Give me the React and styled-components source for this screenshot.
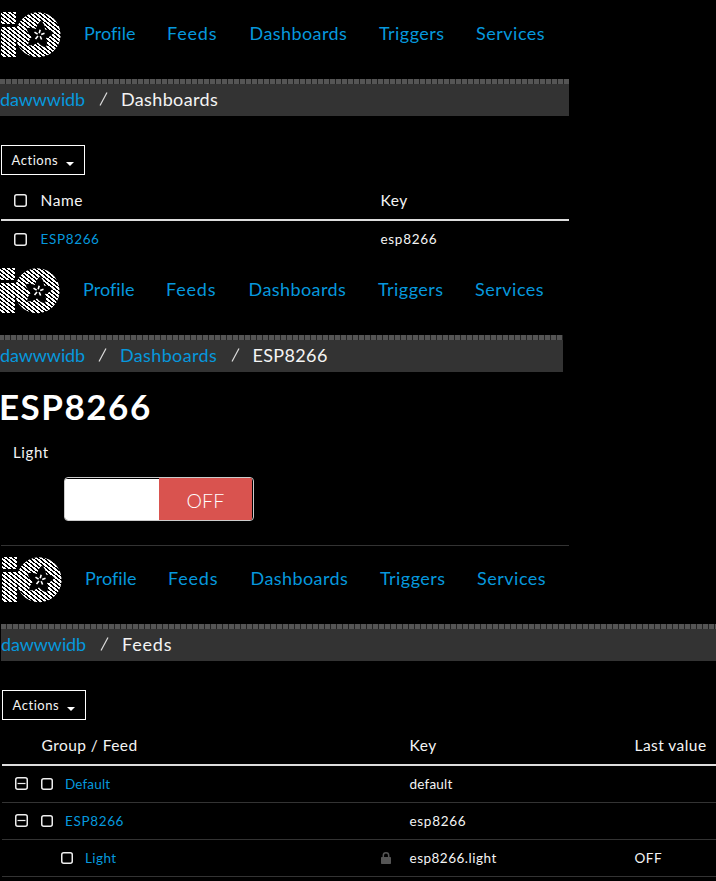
import React from "react";
import styled, { createGlobalStyle } from "styled-components";

const Global = createGlobalStyle`
  * { box-sizing: border-box; }
  body { margin: 0; background: #000; color: #f4f4f4; font-family: "Lato", sans-serif; overflow: hidden; }
`;

const Page = styled.main`
  width: 716px;
  height: 881px;
  overflow: hidden;
  background: #000;
`;

const Panel = styled.section`
  height: ${(p) => p.$height}px;
  padding-left: ${(p) => p.$inset}px;
  overflow: hidden;
`;

const Header = styled.header`
  display: flex;
  align-items: flex-start;
  height: ${(p) => p.$height}px;
  padding-top: ${(p) => p.$top}px;
`;

const LogoSvg = styled.svg`
  display: block;
  flex: none;
  width: 61px;
  height: 46px;
  margin-right: 22px;
`;

const Nav = styled.nav`
  display: grid;
  grid-template-columns: 83px 82.5px 129.5px 97px 90px;
  padding-top: 10px;
`;

const Text = styled.span`
  letter-spacing: ${(p) => p.$ls || 0}px;
  white-space: nowrap;
`;

const Link = styled(Text).attrs({ as: "a" })`
  color: #0698dd;
`;

const NavLink = styled(Link)`
  font-size: 18px;
  line-height: 23px;
`;

const Crumbs = styled.div`
  display: flex;
  align-items: center;
  width: ${(p) => p.$width}px;
  height: 37px;
  margin-left: ${(p) => p.$shift || 0}px;
  padding-top: 2px;
  font-size: 18px;
  line-height: 22px;
  white-space: nowrap;
  background:
    repeating-linear-gradient(90deg, #555 0 5px, #222 5px 6px) ${(p) => p.$tick || 0}px 0 / 720px 5px repeat-x,
    #333;
`;

const Crumb = styled(Text)`
  width: ${(p) => p.$w}px;
  color: ${(p) => (p.$link ? "#0698dd" : "#f4f4f4")};
`;

const Slash = styled.svg`
  flex: none;
  width: 9px;
  height: 14px;
  margin: 0 13px 0 14px;
`;

const ActionsButton = styled.button`
  display: flex;
  align-items: center;
  gap: 7.5px;
  width: 84px;
  height: 30px;
  margin: 29px 0 0 0;
  padding: 0 0 0 9.5px;
  border: 1px solid #fff;
  background: #000;
  color: #f4f4f4;
  font: 13px "Lato", sans-serif;
  letter-spacing: 0.55px;
`;

const Caret = styled.span`
  margin-top: 7px;
  border: 4px solid transparent;
  border-top-color: #fff;
  border-bottom: 0;
`;

const HeadRow = styled.div`
  display: grid;
  grid-template-columns: ${(p) => p.$cols};
  align-items: center;
  width: ${(p) => p.$width}px;
  height: 46px;
  padding-top: 5px;
  border-bottom: 2px solid #ddd;
  font-size: 15.5px;
`;

const Row = styled(HeadRow)`
  height: 37px;
  padding: 0 0 1px;
  border-bottom: ${(p) => (p.$plain ? "0" : "1px solid #333")};
  font-size: 13.5px;
`;

const NameCell = styled.div`
  display: flex;
  align-items: center;
  padding-left: ${(p) => p.$indent}px;
`;

const BoxSvg = styled.svg`
  display: block;
  flex: none;
  margin: ${(p) => p.$drop || 0}px ${(p) => p.$after}px 0 0;
`;

const Title = styled.h1`
  margin: 12px 0 0 -1px;
  color: #fff;
  font: 700 35px/44px "Lato", sans-serif;
  letter-spacing: 1.5px;
`;

const BlockLabel = styled.div`
  margin: 14px 0 0 13px;
  font-size: 15px;
  line-height: 20px;
  letter-spacing: 0.6px;
`;

const Toggle = styled.div`
  display: flex;
  width: 190px;
  height: 44px;
  margin: 15px 0 0 64px;
  padding: 1px 1px 0 0;
  border: 1px solid #ccc;
  border-radius: 4px;
  overflow: hidden;
`;

const ToggleHandle = styled.div`
  width: 94px;
  background: #fff;
`;

const ToggleState = styled.div`
  flex: 1;
  margin-top: -1px;
  background: #d9534f;
  color: #fff;
  font-size: 19.5px;
  font-weight: 300;
  letter-spacing: 0.2px;
  line-height: 45px;
  text-align: center;
`;

const Divider = styled.hr`
  width: 568px;
  height: 1px;
  margin: 24px 0 0 1px;
  border: 0;
  background: #333;
`;

const LockCell = styled.div`
  padding-left: 4px;
  svg { display: block; }
`;

function Logo({ id }) {
  return (
    <LogoSvg viewBox="0 0 61 46">
      <defs>
        <clipPath id={id}>
          <path d="M0 0h15v12h-15zM0 15h16A22.500 22.500 0 1 1 15 27V45h-15z" />
        </clipPath>
      </defs>
      <g clipPath={`url(#${id})`} stroke="#fff" strokeWidth="2" shapeRendering="crispEdges">
        {Array.from({ length: 24 }, (_, i) => (
          <path key={i} d={`M-2 ${i * 4 - 48}l66 52.800`} />
        ))}
      </g>
      <path
        d="M40 8.500Q44 12 44 17.500Q49 17.500 52.500 20.500Q49.500 25 45 26Q47 31 45 35.500Q40 34.500 37 30.500Q32.500 34 27 33.500Q27.500 28 31 24.500Q26.500 21.500 25.500 16Q30.500 15 35 17Q36 12 40 8.500Z"
        fill="#000"
      />
      <path
        d="M38.200 21.200 39.200 17.800M36.600 22.200 33.500 20.200M37 24 34.500 27M39.200 24.200 40.600 27.500M40.200 22.500 43.500 21.300"
        stroke="#fff"
        strokeWidth="1.600"
      />
    </LogoSvg>
  );
}

function Top({ id, height, top }) {
  return (
    <Header $height={height} $top={top}>
      <Logo id={id} />
      <Nav>
        <NavLink $ls={0.05}>Profile</NavLink>
        <NavLink $ls={0.8}>Feeds</NavLink>
        <NavLink $ls={0.42}>Dashboards</NavLink>
        <NavLink $ls={0.45}>Triggers</NavLink>
        <NavLink $ls={0.5}>Services</NavLink>
      </Nav>
    </Header>
  );
}

function Separator() {
  return (
    <Slash viewBox="0 0 9 14">
      <path d="M1 13.500 8 .5" stroke="#ddd" strokeWidth="1.200" />
    </Slash>
  );
}

function Check({ size = 13, after, drop, minus }) {
  const edge = size - 1.5;
  return (
    <BoxSvg width={size} height={size} fill="none" stroke="#eee" $after={after} $drop={drop}>
      <rect x="0.750" y="0.750" width={edge} height={edge} rx="2" strokeWidth="1.500" />
      {minus && <path d="M2.500 6.500h8" strokeWidth="1.200" />}
    </BoxSvg>
  );
}

function Actions() {
  return (
    <ActionsButton>
      Actions <Caret />
    </ActionsButton>
  );
}

const dashCols = "379.5px 1fr";
const feedCols = "375px 32.5px 225px 1fr";
const groups = [
  { name: "Default", key: "default", nameLs: 0.15, keyLs: 0.2 },
  { name: "ESP8266", key: "esp8266", nameLs: 0.65, keyLs: 0.7 },
];

export default function App() {
  return (
    <>
      <Global />
      <Page>
        <Panel $height={256} $inset={1}>
          <Top id="logo-a" height={79} top={12} />
          <Crumbs $width={569} $shift={-1}>
            <Crumb $link $w={85} $ls={-0.1}>dawwwidb</Crumb>
            <Separator />
            <Crumb $ls={0.36}>Dashboards</Crumb>
          </Crumbs>
          <Actions />
          <HeadRow $cols={dashCols} $width={568}>
            <NameCell $indent={13}><Check after={13.5} drop={2} /><Text $ls={0.6}>Name</Text></NameCell>
            <Text $ls={0.5}>Key</Text>
          </HeadRow>
          <Row $cols={dashCols} $width={568} $plain>
            <NameCell $indent={13}><Check after={13.5} /><Link $ls={0.65}>ESP8266</Link></NameCell>
            <Text $ls={0.7}>esp8266</Text>
          </Row>
        </Panel>

        <Panel $height={290} $inset={0}>
          <Top id="logo-b" height={79} top={12} />
          <Crumbs $width={563} $tick={-1}>
            <Crumb $link $w={84} $ls={-0.1}>dawwwidb</Crumb>
            <Separator />
            <Crumb $link $w={96.5} $ls={0.36}>Dashboards</Crumb>
            <Separator />
            <Crumb $ls={0.35}>ESP8266</Crumb>
          </Crumbs>
          <Title>ESP8266</Title>
          <BlockLabel>Light</BlockLabel>
          <Toggle>
            <ToggleHandle />
            <ToggleState>OFF</ToggleState>
          </Toggle>
          <Divider />
        </Panel>

        <Panel $height={335} $inset={2}>
          <Top id="logo-c" height={78} top={11} />
          <Crumbs $width={716} $shift={-1}>
            <Crumb $link $w={85} $ls={-0.1}>dawwwidb</Crumb>
            <Separator />
            <Crumb $ls={0.8}>Feeds</Crumb>
          </Crumbs>
          <Actions />
          <HeadRow $cols={feedCols} $width={714}>
            <NameCell $indent={39.5}><Text $ls={0.45}>Group / Feed</Text></NameCell>
            <span />
            <Text $ls={0.5}>Key</Text>
            <Text $ls={0.45}>Last value</Text>
          </HeadRow>
          {groups.map((g) => (
            <Row key={g.key} $cols={feedCols} $width={714}>
              <NameCell $indent={13}>
                <Check minus after={13} />
                <Check size={12} after={12} />
                <Link $ls={g.nameLs}>{g.name}</Link>
              </NameCell>
              <span />
              <Text $ls={g.keyLs}>{g.key}</Text>
              <span />
            </Row>
          ))}
          <Row $cols={feedCols} $width={714}>
            <NameCell $indent={59}><Check size={12} after={12} /><Link $ls={0.4}>Light</Link></NameCell>
            <LockCell>
              <svg width="10" height="12" viewBox="0 0 10 12">
                <path d="M2.300 6V3.500a2.700 2.700 0 0 1 5.400 0V6" fill="none" stroke="#555" strokeWidth="1.500" />
                <rect y="5" width="10" height="7" rx=".7" fill="#555" />
              </svg>
            </LockCell>
            <Text $ls={0.5}>esp8266.light</Text>
            <Text $ls={0.5}>OFF</Text>
          </Row>
        </Panel>
      </Page>
    </>
  );
}
